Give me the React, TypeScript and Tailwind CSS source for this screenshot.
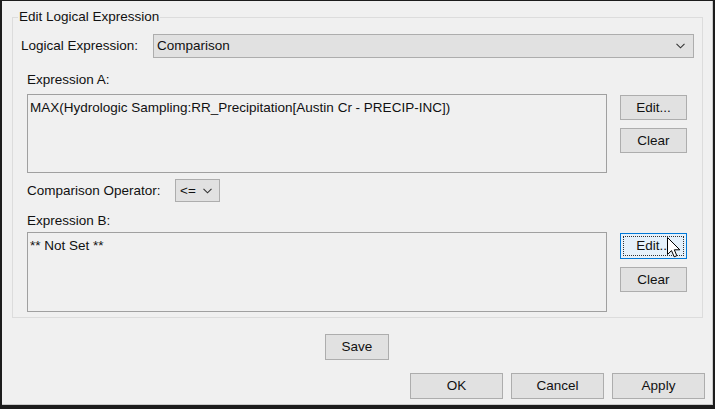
import type { ReactNode } from 'react'

const FONT = { fontFamily: '"Liberation Sans", Arial, sans-serif' }

function Chevron() {
  return (
    <svg width="9" height="6" viewBox="0 0 9 6" className="shrink-0">
      <path d="M0.5 0.8 L4.5 4.8 L8.5 0.8" fill="none" stroke="#333" strokeWidth="1.1" />
    </svg>
  )
}

function Button({ children, className = '', focused = false }: { children: ReactNode; className?: string; focused?: boolean }) {
  if (focused) {
    return (
      <div className={`flex items-center justify-center border border-[#0078d7] bg-[#e5f1fb] p-[2px] ${className}`}>
        <div className="flex h-full w-full items-center justify-center border border-dotted border-[#333]">{children}</div>
      </div>
    )
  }
  return (
    <div className={`flex items-center justify-center border border-[#adadad] bg-[#e1e1e1] ${className}`}>{children}</div>
  )
}

function Cursor() {
  return (
    <svg width="14" height="22" viewBox="0 0 14 22" className="absolute left-[47px] top-[5px]">
      <path
        d="M0.5 0.5 L0.5 17.5 L4.5 13.6 L7.2 19.8 L9.8 18.7 L7.3 12.8 L12.8 12.8 Z"
        fill="#fff"
        stroke="#000"
        strokeWidth="1"
        strokeLinejoin="round"
      />
    </svg>
  )
}

export default function App() {
  return (
    <div className="h-[409px] w-[715px] border-t border-r-2 border-b-4 border-l-2 border-[#1c1c1c] text-[13.5px] leading-[14px] text-[#111]" style={FONT}>
      <div className="flex h-full w-full flex-col border-r border-b border-[#c9c9c9] bg-[#f0f0f0]">
        {/* group box */}
        <div className="relative mt-[16px] ml-[10px] flex h-[301px] w-[691px] flex-col border border-[#dcdcdc] px-[8px] pt-[16px]">
          <span className="absolute top-[-8px] left-[5px] bg-[#f0f0f0] px-[1px]">Edit Logical Expression</span>

          <div className="flex h-[24px] items-center">
            <span className="w-[132px]">Logical Expression:</span>
            <div className="flex h-[24px] flex-1 items-center justify-between border border-[#adadad] bg-[#e1e1e1] pr-[8px] pl-[3px]">
              <span>Comparison</span>
              <Chevron />
            </div>
          </div>

          <div className="mt-[15px] ml-[6px]">Expression A:</div>

          <div className="mt-[7px] ml-[6px] flex">
            <div className="h-[79px] w-[580px] border border-[#a0a0a0] px-[2px] pt-[6px]">
              MAX(Hydrologic Sampling:RR_Precipitation[Austin Cr - PRECIP-INC])
            </div>
            <div className="ml-[13px] flex flex-col gap-[8px] pt-[1px]">
              <Button className="h-[25px] w-[67px]">Edit...</Button>
              <Button className="h-[25px] w-[67px]">Clear</Button>
            </div>
          </div>

          <div className="mt-[6px] ml-[6px] flex h-[23px] items-center">
            <span className="w-[148px]">Comparison Operator:</span>
            <div className="flex h-[23px] w-[45px] items-center justify-between border border-[#adadad] bg-[#e1e1e1] pr-[7px] pl-[4px]">
              <span>&lt;=</span>
              <Chevron />
            </div>
          </div>

          <div className="mt-[12px] ml-[6px]">Expression B:</div>

          <div className="mt-[4px] ml-[6px] flex">
            <div className="h-[80px] w-[580px] border border-[#a0a0a0] px-[2px] pt-[6px]">** Not Set **</div>
            <div className="relative ml-[13px] flex flex-col gap-[8px] pt-[1px]">
              <Button focused className="h-[26px] w-[67px]">Edit...</Button>
              <Button className="h-[25px] w-[67px]">Clear</Button>
              <Cursor />
            </div>
          </div>
        </div>

        <div className="mt-[16px] flex justify-center">
          <Button className="h-[26px] w-[64px]">Save</Button>
        </div>

        <div className="mt-[13px] flex justify-end gap-[8px] pr-[7px]">
          <Button className="h-[26px] w-[93px]">OK</Button>
          <Button className="h-[26px] w-[93px]">Cancel</Button>
          <Button className="h-[26px] w-[93px]">Apply</Button>
        </div>
      </div>
    </div>
  )
}
